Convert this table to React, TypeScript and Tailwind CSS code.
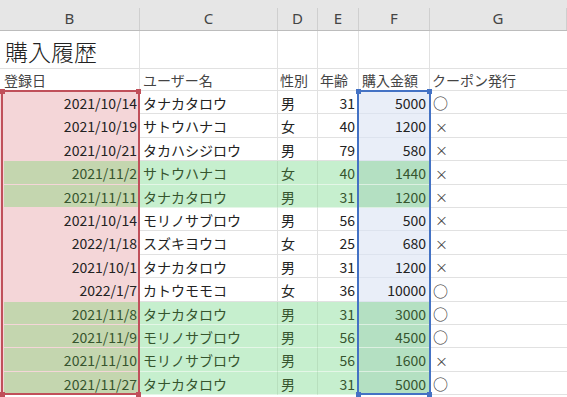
import React from 'react';

type Row = {
  date: string;
  name: string;
  sex: string;
  age: number;
  amount: number;
  coupon: string;
  green: boolean;
};

const rows: Row[] = [
  { date: '2021/10/14', name: 'タナカタロウ', sex: '男', age: 31, amount: 5000, coupon: '○', green: false },
  { date: '2021/10/19', name: 'サトウハナコ', sex: '女', age: 40, amount: 1200, coupon: '×', green: false },
  { date: '2021/10/21', name: 'タカハシジロウ', sex: '男', age: 79, amount: 580, coupon: '×', green: false },
  { date: '2021/11/2', name: 'サトウハナコ', sex: '女', age: 40, amount: 1440, coupon: '×', green: true },
  { date: '2021/11/11', name: 'タナカタロウ', sex: '男', age: 31, amount: 1200, coupon: '×', green: true },
  { date: '2021/10/14', name: 'モリノサブロウ', sex: '男', age: 56, amount: 500, coupon: '×', green: false },
  { date: '2022/1/18', name: 'スズキヨウコ', sex: '女', age: 25, amount: 680, coupon: '×', green: false },
  { date: '2021/10/1', name: 'タナカタロウ', sex: '男', age: 31, amount: 1200, coupon: '×', green: false },
  { date: '2022/1/7', name: 'カトウモモコ', sex: '女', age: 36, amount: 10000, coupon: '○', green: false },
  { date: '2021/11/8', name: 'タナカタロウ', sex: '男', age: 31, amount: 3000, coupon: '○', green: true },
  { date: '2021/11/9', name: 'モリノサブロウ', sex: '男', age: 56, amount: 4500, coupon: '○', green: true },
  { date: '2021/11/10', name: 'モリノサブロウ', sex: '男', age: 56, amount: 1600, coupon: '×', green: true },
  { date: '2021/11/27', name: 'タナカタロウ', sex: '男', age: 31, amount: 5000, coupon: '○', green: true },
];

// row heights so the 13 rows land on Excel's 23.4px pitch
const heights = ['h-[23px]', 'h-[24px]', 'h-[23px]', 'h-[24px]', 'h-[23px]', 'h-[23px]', 'h-[24px]', 'h-[23px]', 'h-[24px]', 'h-[23px]', 'h-[23px]', 'h-[24px]', 'h-[23px]'];

const font = { fontFamily: '"Noto Sans CJK JP", "Noto Sans", sans-serif' };

const Handle: React.FC<{ className: string }> = ({ className }) => (
  <div className={`absolute w-[5px] h-[5px] ${className}`} />
);

const App: React.FC = () => {
  return (
    <div className="relative w-[567px] h-[397px] overflow-hidden bg-white text-[14px] leading-none text-[#222]" style={font}>
      {/* column letters */}
      <div className="flex h-[31px] pt-[8px] bg-[#e6e6e6] border-b border-[#bcbcbc] text-[15px] text-[#444]" style={{ fontFamily: '"Noto Sans", sans-serif' }}>
        {[
          ['B', 'w-[140px]'],
          ['C', 'w-[138px]'],
          ['D', 'w-[40px]'],
          ['E', 'w-[41px]'],
          ['F', 'w-[71px]'],
          ['G', 'flex-1'],
        ].map(([l, w]) => (
          <div key={l} className={`${w} flex items-center justify-center border-r border-[#cfcfcf] pb-[2px]`}>
            {l}
          </div>
        ))}
      </div>

      {/* title row */}
      <div className="flex h-[38px] border-b border-[#e1e1e1]">
        <div className="w-[140px] flex items-center pl-[5px] pt-[3px] text-[23px] font-light text-[#222] border-r border-[#e1e1e1]">購入履歴</div>
        <div className="w-[138px] border-r border-[#e1e1e1]" />
        <div className="w-[40px] border-r border-[#e1e1e1]" />
        <div className="w-[41px] border-r border-[#e1e1e1]" />
        <div className="w-[71px] border-r border-[#e1e1e1]" />
        <div className="flex-1" />
      </div>

      {/* header labels */}
      <div className="flex h-[22px] border-b border-[#e1e1e1] text-[#444]">
        <div className="w-[140px] flex items-center pl-[4px] border-r border-[#e1e1e1]">登録日</div>
        <div className="w-[138px] flex items-center pl-[3px] border-r border-[#e1e1e1]">ユーザー名</div>
        <div className="w-[40px] flex items-center pl-[2px] border-r border-[#e1e1e1]">性別</div>
        <div className="w-[41px] flex items-center pl-[2px] border-r border-[#e1e1e1]">年齢</div>
        <div className="w-[71px] flex items-center pl-[3px] border-r border-[#e1e1e1]">購入金額</div>
        <div className="flex-1 flex items-center pl-[2px]">クーポン発行</div>
      </div>

      {/* data */}
      {rows.map((r, i) => {
        const g = r.green;
        const cell = g
          ? 'bg-[#c6efce] border-r border-b border-r-[#b8dfbe] border-b-[#e4f6e7] text-[#36552e]'
          : 'bg-white border-r border-b border-[#e1e1e1]';
        return (
          <div key={i} className={`flex ${heights[i]}`}>
            <div className="w-[140px] bg-[#f4d6d8] pl-[4px] pb-[1px]">
              <div className={`h-full flex items-center justify-end pr-[3px] pt-[1px] ${g ? 'bg-[#c4d6af] text-[#36552e]' : ''}`}>
                {r.date}
              </div>
            </div>
            <div className={`w-[138px] flex items-center pl-[3px] pt-[1px] ${cell}`}>{r.name}</div>
            <div className={`w-[40px] flex items-center pl-[3px] pt-[1px] ${cell}`}>{r.sex}</div>
            <div className={`w-[41px] flex items-center justify-end pr-[3px] pt-[1px] ${cell}`}>{r.age}</div>
            <div
              className={`w-[71px] flex items-center justify-end pr-[4px] pt-[1px] border-b ${
                g ? 'bg-[#b4e0c2] border-[#dcefe1] text-[#36552e]' : 'bg-[#e9eef8] border-[#dde3ee]'
              }`}
            >
              {r.amount}
            </div>
            <div className="flex-1 flex items-center pl-[3px] pt-[1px] bg-white border-b border-[#e1e1e1] text-[#333]">
              {r.coupon === '○' ? (
                <span className="text-[15px]">○</span>
              ) : (
                <span className="pl-[2px] text-[13px] text-[#444]">×</span>
              )}
            </div>
          </div>
        );
      })}

      {/* range highlight for B */}
      <div className="absolute left-[1px] top-[90px] w-[139px] h-[305px] border-2 border-[#c0505a] pointer-events-none" />
      <Handle className="left-[0px] top-[89px] bg-[#c0505a]" />
      <Handle className="left-[136px] top-[89px] bg-[#c0505a]" />
      <Handle className="left-[0px] top-[392px] bg-[#c0505a]" />
      <Handle className="left-[136px] top-[392px] bg-[#c0505a]" />

      {/* range highlight for F */}
      <div className="absolute left-[357px] top-[90px] w-[74px] h-[305px] border-2 border-[#4472c4] pointer-events-none" />
      <Handle className="left-[356px] top-[89px] bg-[#4472c4]" />
      <Handle className="left-[427px] top-[89px] bg-[#4472c4]" />
      <Handle className="left-[356px] top-[392px] bg-[#4472c4]" />
      <Handle className="left-[427px] top-[392px] bg-[#4472c4]" />
    </div>
  );
};

export default App;
